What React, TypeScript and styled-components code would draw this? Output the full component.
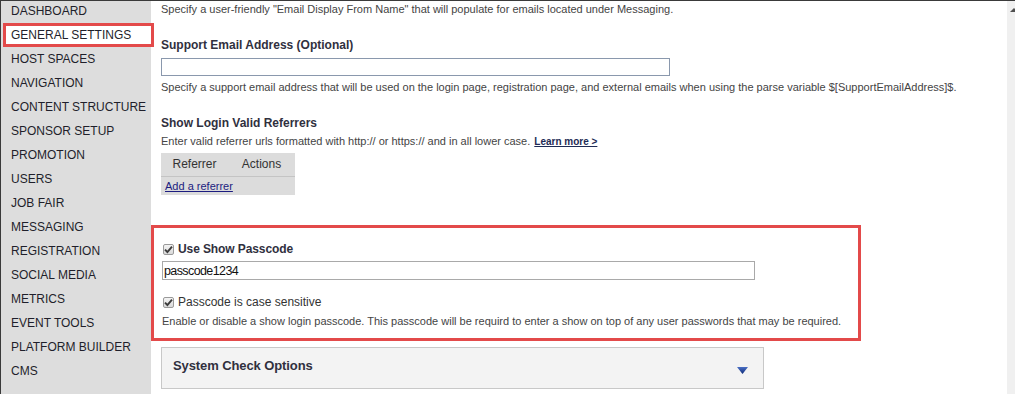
import React from "react";
import styled, { createGlobalStyle } from "styled-components";

const Global = createGlobalStyle`
  html, body { margin: 0; padding: 0; background: #fff; }
  body { font-family: "Liberation Sans", Arial, sans-serif; overflow: hidden; }
  * { box-sizing: border-box; }
`;

const Frame = styled.div`
  display: flex;
  width: 1015px;
  height: 394px;
  border-top: 1px solid #3a3a3a;
  border-left: 1px solid #3a3a3a;
  overflow: hidden;
`;

const Sidebar = styled.nav`
  width: 150px;
  flex: none;
  background: #dddddd;
  position: relative;
  z-index: 1;
`;

const NavList = styled.ul`
  list-style: none;
  margin: -2px 0 0 0;
  padding: 0;
`;

const NavItem = styled.li<{ $active?: boolean }>`
  height: 24px;
  line-height: 24px;
  font-size: 12px;
  color: #1f1f2b;
  white-space: nowrap;
  padding-left: ${(p) => (p.$active ? "5px" : "10px")};
  ${(p) =>
    p.$active &&
    `
    margin-left: 2px;
    width: 151px;
    line-height: 18px;
    background: #fff;
    border: 3px solid #e34a4a;
  `}
`;

const Main = styled.main`
  flex: 1;
  padding: 0 0 0 10px;
  color: #444;
  min-width: 0;
`;

const Help = styled.p<{ $top?: number }>`
  margin: ${(p) => p.$top ?? 0}px 0 0 0;
  font-size: 11px;
  line-height: 14px;
  color: #444;
  white-space: nowrap;
`;

const Heading = styled.h3<{ $top?: number }>`
  margin: ${(p) => p.$top ?? 0}px 0 0 0;
  font-size: 12px;
  line-height: 15px;
  font-weight: bold;
  color: #30303e;
`;

const TextInput = styled.input<{ $width: number; $top?: number }>`
  display: block;
  width: ${(p) => p.$width}px;
  height: ${(p) => (p.$top !== undefined ? 19 : 18)}px;
  margin: ${(p) => p.$top ?? 5}px 0 0 0;
  padding: 0 2px;
  border: 1px solid #8a98ad;
  font-family: "Liberation Sans", Arial, sans-serif;
  font-size: 12px;
  color: #111;
  background: #fff;
  outline: none;
`;

const RefHelp = styled.p`
  margin: 3px 0 0 0;
  font-size: 11px;
  line-height: 14px;
  color: #444;
  white-space: nowrap;
`;

const LearnMore = styled.a`
  margin-left: 4px;
  font-size: 10px;
  font-weight: bold;
  color: #1e2b55;
  text-decoration: underline;
`;

const RefTable = styled.table`
  margin-top: 4px;
  border-collapse: collapse;
  background: #dcdcdc;
  font-size: 12px;
  color: #333;
`;

const Th = styled.th`
  width: 67px;
  height: 23px;
  padding: 0;
  font-weight: normal;
  text-align: center;
  border-bottom: 1px solid #c4c4c4;
`;

const Td = styled.td`
  height: 19px;
  padding: 0 4px;
  font-size: 11px;
`;

const RefLink = styled.a`
  color: #1c1c80;
  text-decoration: underline;
`;

const Highlight = styled.section`
  margin: 30px 0 0 -10px;
  width: 710px;
  border: 3px solid #e34a4a;
  padding: 13px 0 10px 8px;
`;

const CheckRow = styled.label<{ $bold?: boolean }>`
  display: flex;
  align-items: center;
  gap: 4px;
  height: 16px;
  font-size: 12px;
  font-weight: ${(p) => (p.$bold ? "bold" : "normal")};
  color: ${(p) => (p.$bold ? "#30303e" : "#333")};
  letter-spacing: ${(p) => (p.$bold ? "-0.1px" : "0")};
`;

const CheckBox = styled.span`
  width: 11px;
  height: 11px;
  flex: none;
  border: 1px solid #9a9a9a;
  border-radius: 2px;
  background: linear-gradient(#f4f4f4, #d9d9d9);
  display: flex;
  align-items: center;
  justify-content: center;
  margin-left: 1px;
`;

const PassInput = styled(TextInput)`
  font-size: 12.5px;
  letter-spacing: -0.6px;
  border-color: #a9a9a9;
  padding: 0 0 0 1px;
`;

const Gap = styled.div<{ $h: number }>`
  height: ${(p) => p.$h}px;
`;

const Panel = styled.div`
  margin-top: 6px;
  width: 603px;
  height: 42px;
  background: #f3f3f3;
  border: 1px solid #c8c8c8;
  display: flex;
  align-items: center;
  justify-content: space-between;
  padding: 0 15px 0 11px;
`;

const PanelTitle = styled.span`
  font-size: 13px;
  font-weight: bold;
  color: #30303e;
  letter-spacing: -0.1px;
  margin-top: -6px;
`;

const Caret = styled.svg`
  margin-top: 4px;
`;

const Scrollbar = styled.div`
  width: 8px;
  flex: none;
  background: #f0f0f0;
  position: relative;
`;

const ScrollArrow = styled.svg`
  position: absolute;
  top: 6px;
  left: 3px;
`;

const Check = () => (
  <svg width="9" height="9" viewBox="0 0 9 9">
    <path d="M1 4.6 L3.4 7 L8 1.6" fill="none" stroke="#3c3c3c" strokeWidth="1.9" />
  </svg>
);

const navItems = [
  "DASHBOARD",
  "GENERAL SETTINGS",
  "HOST SPACES",
  "NAVIGATION",
  "CONTENT STRUCTURE",
  "SPONSOR SETUP",
  "PROMOTION",
  "USERS",
  "JOB FAIR",
  "MESSAGING",
  "REGISTRATION",
  "SOCIAL MEDIA",
  "METRICS",
  "EVENT TOOLS",
  "PLATFORM BUILDER",
  "CMS",
];

export default function App() {
  return (
    <>
      <Global />
      <Frame>
        <Sidebar>
          <NavList>
            {navItems.map((n) => (
              <NavItem key={n} $active={n === "GENERAL SETTINGS"}>
                {n}
              </NavItem>
            ))}
          </NavList>
        </Sidebar>
        <Main>
          <Help $top={1}>
            Specify a user-friendly "Email Display From Name" that will populate for emails located under Messaging.
          </Help>
          <Heading $top={22}>Support Email Address (Optional)</Heading>
          <TextInput $width={509} type="text" defaultValue="" />
          <Help $top={4}>
            Specify a support email address that will be used on the login page, registration page, and external emails when using the parse variable $[SupportEmailAddress]$.
          </Help>
          <Heading $top={22}>Show Login Valid Referrers</Heading>
          <RefHelp>
            Enter valid referrer urls formatted with http:// or https:// and in all lower case.
            <LearnMore href="#">Learn more &gt;</LearnMore>
          </RefHelp>
          <RefTable>
            <thead>
              <tr>
                <Th>Referrer</Th>
                <Th>Actions</Th>
              </tr>
            </thead>
            <tbody>
              <tr>
                <Td colSpan={2}>
                  <RefLink href="#">Add a referrer</RefLink>
                </Td>
              </tr>
            </tbody>
          </RefTable>
          <Highlight>
            <CheckRow $bold>
              <CheckBox>
                <Check />
              </CheckBox>
              Use Show Passcode
            </CheckRow>
            <PassInput $width={593} $top={4} type="text" defaultValue="passcode1234" />
            <Gap $h={14} />
            <CheckRow>
              <CheckBox>
                <Check />
              </CheckBox>
              Passcode is case sensitive
            </CheckRow>
            <Help $top={4}>
              Enable or disable a show login passcode. This passcode will be requird to enter a show on top of any user passwords that may be required.
            </Help>
          </Highlight>
          <Panel>
            <PanelTitle>System Check Options</PanelTitle>
            <Caret width="11" height="7" viewBox="0 0 11 7">
              <defs>
                <linearGradient id="tri" x1="0" y1="0" x2="0" y2="1">
                  <stop offset="0" stopColor="#4a6fc4" />
                  <stop offset="1" stopColor="#0e2a78" />
                </linearGradient>
              </defs>
              <path d="M0 0 H11 L5.5 7 Z" fill="url(#tri)" />
            </Caret>
          </Panel>
        </Main>
        <Scrollbar>
          <ScrollArrow width="8" height="8" viewBox="0 0 8 8">
            <path d="M4 1 L8 5 H0 Z" fill="#505050" />
          </ScrollArrow>
        </Scrollbar>
      </Frame>
    </>
  );
}
